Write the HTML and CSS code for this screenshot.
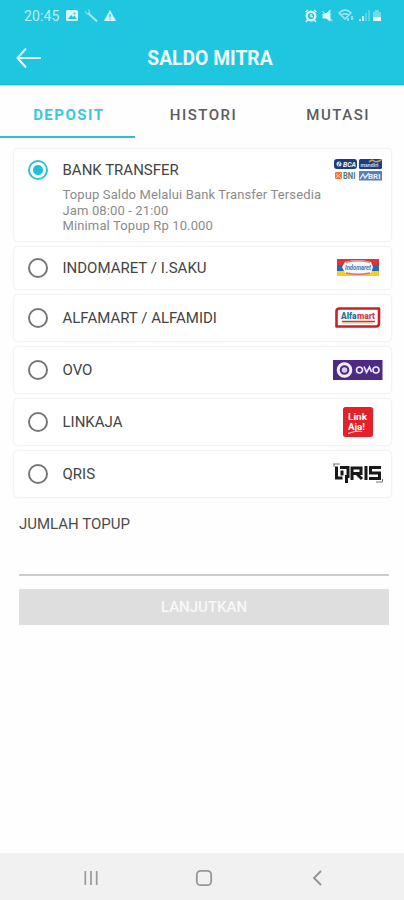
FILE: index.html
```
<!DOCTYPE html>
<html lang="id">
<head>
<meta charset="utf-8">
<title>Saldo Mitra</title>
<link rel="stylesheet" href="styles.css">
</head>
<body>
<div class="app">
  <header class="header">
    <div class="status">
      <span class="clock">20:45</span>
      <svg class="status-left" width="54" height="16" viewBox="0 0 54 16">
        <rect x="2" y="2" width="12" height="11" rx="1.500" fill="#d8f6f9"/>
        <path d="M4 11l3-4 2 2 1.500-1.500 2 3.500z" fill="#1fc6df"/><circle cx="10.500" cy="5.500" r="1" fill="#1fc6df"/>
        <path d="M24 5l9 8.500" fill="none" stroke="#a9eaf1" stroke-width="1.800"/><path d="M21 3l2 3 3-2M24 1.500l2 2.500" fill="none" stroke="#7fdfeb" stroke-width="1.200"/>
        <path d="M46 2l6 11H40z" fill="#d8f6f9"/><path d="M46 6v3.500M46 10.500v1.300" stroke="#1fc6df" stroke-width="1.300"/>
      </svg>
      <svg class="status-right" width="80" height="16" viewBox="0 0 80 16">
        <circle cx="9" cy="8" r="4.300" fill="none" stroke="#d8f6f9" stroke-width="2.400"/><path d="M3.500 4l2.500-2M12 2l2.500 2M9 6v2.500h2M5.500 12l-1.500 2M12.500 12l1.500 2" fill="none" stroke="#d8f6f9" stroke-width="1.400"/>
        <path d="M21 6h3l4-4v11l-4-3h-3zM20.500 3l10 10" fill="#d8f6f9" stroke="#d8f6f9"/>
        <path d="M37 5q6.500-6 12 0l-6 6zM39 7.500q4-3.500 8 0" fill="none" stroke="#a6eaf1" stroke-width="1.400"/><path d="M46 13v-3M50 8v4" stroke="#b2edf3" stroke-width="1.500"/>
        <path d="M57 13v-2h2v2zM60 13V8h2v5z" fill="#c6f2f6"/><path d="M63 13V5h2v8zM66 13V2h2v11z" fill="#56d4e5"/>
        <path d="M71 4h2V2h4v2h2v5h-8z" fill="#71dce9"/><path d="M71 9h8v4h-8z" fill="#e6fafc"/>
      </svg>
    </div>
    <div class="bar">
      <svg class="back" width="28" height="24" viewBox="0 0 28 24"><path d="M25 12H2M10 2.500L1.500 12l8.500 9.500" fill="none" stroke="#e6fbfd" stroke-width="2"/></svg>
      <h1 class="title">SALDO MITRA</h1>
    </div>
  </header>

  <nav class="tabs">
    <a class="tab active">DEPOSIT</a>
    <a class="tab">HISTORI</a>
    <a class="tab">MUTASI</a>
  </nav>

  <main class="content">
    <section class="methods">
      <label class="card bank">
        <span class="radio on"></span>
        <span class="label">BANK TRANSFER</span>
        <svg class="logo" width="50" height="24" viewBox="0 0 50 24">
          <rect x="1" y="1" width="23" height="10" rx="3" fill="#1d3b7d"/><circle cx="6" cy="6" r="2.500" fill="#d2e3f3"/><path d="M5 8l2-4" stroke="#315f9c"/>
          <text x="10" y="9.200" class="lg i" font-size="8" textLength="13" lengthAdjust="spacingAndGlyphs" fill="#edf5ff">BCA</text>
          <rect x="26" y="1" width="23" height="10" rx="1.500" fill="#1f3d87"/><path d="M36 4q3-3 5-1t7-1" fill="none" stroke="#cba452" stroke-width="1.500"/>
          <text x="27.500" y="9" class="lg" font-size="6" textLength="18" lengthAdjust="spacingAndGlyphs" fill="#c0d3ef">mandiri</text>
          <rect x="2" y="14" width="7" height="7" rx="1" fill="#ed7842"/><path d="M3 20l5-5M3 16l5 4" stroke="#f8c9ae"/>
          <text x="10" y="21" class="lg" font-size="8.500" textLength="12.500" lengthAdjust="spacingAndGlyphs" fill="#52766e">BNI</text>
          <rect x="26" y="13" width="23" height="9.500" fill="#577fb8"/><path d="M27 21l3-5 2 4 4-5" fill="none" stroke="#e2edf9" stroke-width="1.300"/>
          <text x="35" y="20.500" class="lg" font-size="7" textLength="12.500" lengthAdjust="spacingAndGlyphs" fill="#e7f0fb">BRI</text>
        </svg>
        <p class="desc">Topup Saldo Melalui Bank Transfer Tersedia<br>Jam 08:00 - 21:00<br>Minimal Topup Rp 10.000</p>
      </label>

      <label class="card indomaret">
        <span class="radio"></span>
        <span class="label">INDOMARET / I.SAKU</span>
        <svg class="logo" width="50" height="24" viewBox="0 0 50 24">
          <path d="M4 3h42v6H4z" fill="#d9353d"/><path d="M4 9h42v6H4z" fill="#2c67b4"/><path d="M4 15h42v5H4z" fill="#f6cd22"/>
          <path d="M12 6q13-4 26 0l2 5-2 6q-13 3-26 0l-3-6z" fill="#f5f7fa"/>
          <path d="M13 6.300q12-3 24 0M13 17q12 2.500 24 0" fill="none" stroke="#df6c73" stroke-width="1.300"/>
          <text x="12" y="14.300" class="lg i" font-size="7.500" textLength="26" lengthAdjust="spacingAndGlyphs" fill="#357db7">Indomaret</text>
        </svg>
      </label>

      <label class="card alfamart">
        <span class="radio"></span>
        <span class="label">ALFAMART / ALFAMIDI</span>
        <svg class="logo" width="50" height="24" viewBox="0 0 50 24">
          <path d="M6 2.500h40v15q0 3-3 3H3.500V5.500q0-3 3-3z" fill="#fff" stroke="#c9202d" stroke-width="2.600" stroke-linejoin="round"/>
          <text x="8" y="13" class="lg heavy" font-size="8.500" textLength="15.500" lengthAdjust="spacingAndGlyphs" fill="#217197">Alfa</text>
          <text x="24" y="13" class="lg heavy" font-size="8.500" textLength="18" lengthAdjust="spacingAndGlyphs" fill="#ce414d">mart</text>
          <path d="M9 14.800h33v1.500H9z" fill="#cf3038"/><path d="M9 16.500h31v1H9z" fill="#efb55b"/>
        </svg>
      </label>

      <label class="card ovo">
        <span class="radio"></span>
        <span class="label">OVO</span>
        <svg class="logo" width="50" height="24" viewBox="0 0 50 24">
          <rect x="0" y="2" width="49.500" height="20" fill="#4b2b87"/>
          <circle cx="11.500" cy="12" r="6.300" fill="none" stroke="#f5f0fb" stroke-width="3"/><circle cx="11.500" cy="12" r="2.800" fill="#d8ceeb"/>
          <path d="M29.500 12a3 3 0 1 1-6 0 3 3 0 0 1 6 0zM31 8.500l2.500 6L36.500 9l2 5M46 12a3 3 0 1 1-6 0 3 3 0 0 1 6 0z" fill="none" stroke="#f3edfb" stroke-width="1.600"/>
        </svg>
      </label>

      <label class="card linkaja">
        <span class="radio"></span>
        <span class="label">LINKAJA</span>
        <svg class="logo" width="50" height="32" viewBox="0 0 50 32">
          <rect x="10" y="1" width="30" height="30" rx="2.500" fill="#e42128"/>
          <text x="15" y="13.500" class="lg" font-size="9" textLength="19" lengthAdjust="spacingAndGlyphs" fill="#fff">Link</text>
          <text x="15" y="24" class="lg" font-size="9" textLength="17" lengthAdjust="spacingAndGlyphs" fill="#fff">Aja!</text>
          <path d="M15 27.500q8-3 14-2" fill="none" stroke="#ffd8d8" stroke-width="1.200"/>
        </svg>
      </label>

      <label class="card qris">
        <span class="radio"></span>
        <span class="label">QRIS</span>
        <svg class="logo" width="50" height="24" viewBox="0 0 50 24">
          <path d="M3.500 4.500v11.500h6M7 5.500h8v10.500M9 8.500v5M13.500 13v8M19 18V6h9v5.500h-8M24 12l5 5M33 4v14M48 5.500H37.500v5.500h9v5.500H36" fill="none" stroke="#181818" stroke-width="3"/>
          <path d="M0 2h7M1 2v3M43 20h6.500v-3" fill="none" stroke="#777"/>
        </svg>
      </label>
    </section>

    <section class="topup">
      <h2 class="amount-label">JUMLAH TOPUP</h2>
      <div class="amount-field"></div>
      <button class="submit">LANJUTKAN</button>
    </section>
  </main>

  <footer class="navbar">
    <svg width="18" height="18" viewBox="0 0 18 18"><path d="M3.300 2v14M9 2v14M14.700 2v14" stroke="#999" stroke-width="1.700"/></svg>
    <svg width="18" height="18" viewBox="0 0 18 18"><rect x="1.800" y="1.800" width="14.400" height="14.400" rx="4" fill="none" stroke="#969696" stroke-width="1.800"/></svg>
    <svg width="18" height="18" viewBox="0 0 18 18"><path d="M13 2L6 9l7 7" fill="none" stroke="#929292" stroke-width="1.800"/></svg>
  </footer>
</div>
</body>
</html>
```
FILE: styles.css
```
* { box-sizing: border-box; }
body { margin: 0; background: #fefefe; font-family: Roboto, sans-serif; color: #444; }
.app { width: 404px; height: 900px; display: flex; flex-direction: column; }

.header { height: 85px; background: #1fc6df; border-bottom: 1px solid #18bbd2; flex: none; }
.status { height: 32px; padding: 0 22px 0 24px; display: flex; align-items: center; }
.clock { width: 40px; font-size: 14px; letter-spacing: .1px; color: #b9eff5; }
.status-right { margin-left: auto; }
.bar { height: 52px; padding: 0 16px; display: grid; grid-template-columns: 28px 1fr 12px; align-items: center; }
.title { margin: 0; padding-top: 2px; text-align: center; font-size: 19.300px; font-weight: 700; line-height: 50px; color: #effcfd; white-space: nowrap; }

.tabs { height: 53px; flex: none; display: grid; grid-template-columns: repeat(3, 1fr); border-top: 1px solid #a5f3fc; }
.tab { display: flex; align-items: center; justify-content: center; padding: 7px 0 0 3px; border-bottom: 2px solid transparent; font-size: 15px; font-weight: 500; letter-spacing: 1.500px; color: #5c5c5c; }
.tab.active { color: #3ac8d9; border-bottom-color: #30bfd0; font-weight: 700; }

.content { flex: 1; padding-top: 10px; }
.methods { padding: 0 12px 0 13px; display: flex; flex-direction: column; gap: 4px; }
.card { display: grid; grid-template-columns: 21px 1fr 50px; column-gap: 13.500px; align-items: center; padding: 0 8px 0 14px; border: 1px solid #f3f3f3; border-radius: 5px; background: #fff; box-shadow: 0 0 2px #f4f4f4; }
.bank { height: 94px; grid-template-rows: 42px auto; align-content: start; }
.indomaret { height: 44px; }
.alfamart { height: 48px; }
.ovo, .linkaja, .qris { height: 48px; }
.radio { width: 20px; height: 20px; border: 2px solid #777; border-radius: 50%; }
.radio.on { border-color: #30c2d5; background: radial-gradient(circle, #20bfd5 0 4.500px, #fff 5.500px); }
.label { font-size: 15px; line-height: 18px; color: #444; white-space: nowrap; }
.logo { display: block; }
.desc { grid-column: 2 / 4; margin: -4px 0 0; font-size: 13px; line-height: 15.500px; letter-spacing: .13px; color: #8b8b8b; white-space: nowrap; }
.lg { font-family: Roboto, sans-serif; font-weight: 700; }
.i { font-style: italic; }
.heavy { font-weight: 900; }

.topup { padding: 17px 15px 0 19px; }
.amount-label { margin: 0; font-size: 15px; line-height: 18px; font-weight: 400; color: #4c4c4c; }
.amount-field { height: 43px; border-bottom: 2px solid #cdcdcd; }
.submit { display: block; width: 100%; height: 36px; margin-top: 13px; padding: 1px 0 0; border: 0; background: #dedede; color: #f8f8f8; font: 500 15px/35px Roboto, sans-serif; }

.navbar { height: 47px; flex: none; background: #f1f1f1; display: grid; grid-template-columns: repeat(3, 113px); justify-content: center; justify-items: center; align-items: center; padding-top: 3px; padding-left: 4px; }
```
